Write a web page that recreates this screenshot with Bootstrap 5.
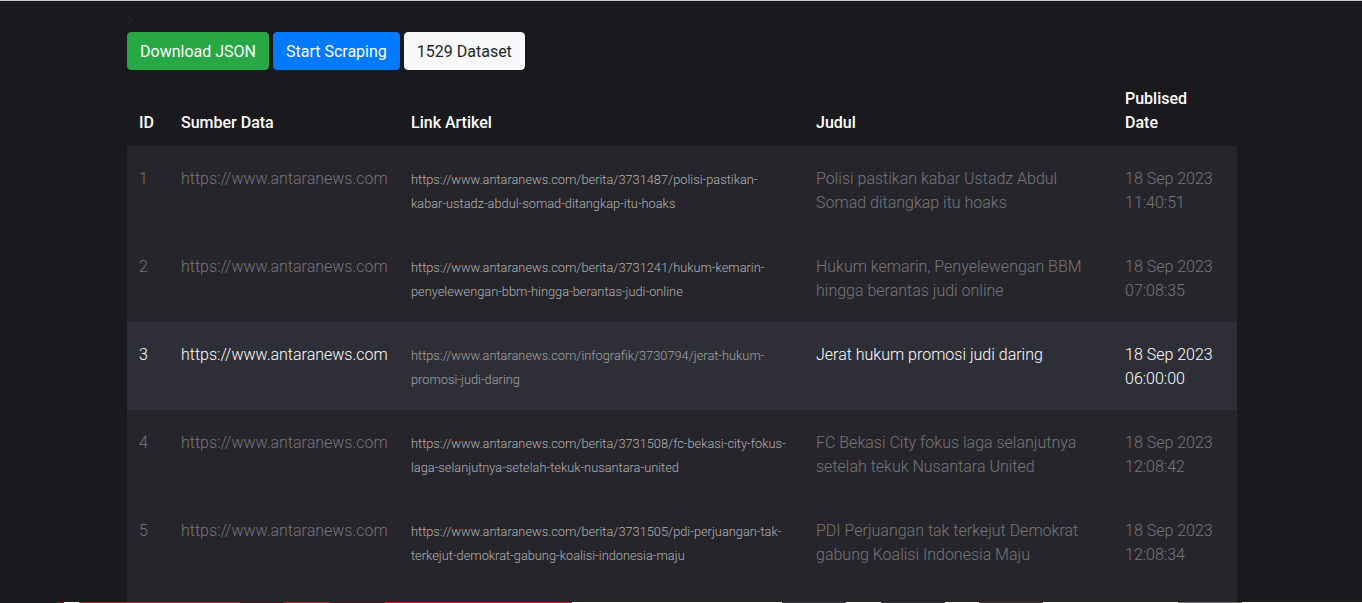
<!DOCTYPE html>
<html lang="id">
<head>
<meta charset="utf-8">
<meta name="viewport" content="width=device-width, initial-scale=1">
<title>Dataset</title>
<link href="https://cdn.jsdelivr.net/npm/bootstrap@5.3.0/dist/css/bootstrap.min.css" rel="stylesheet">
<style>
body{font-family:Roboto,sans-serif;background:#1a191d;color:#26272b;font-weight:300;border-top:1px solid #c5c7c5}
.shell{max-width:1140px;padding:7px 14px 0 16px}
.stray{line-height:24px;font-size:16px}
.tools .btn{--bs-btn-border-radius:4px;font-weight:400;line-height:24px;padding:7px 12px 5px}
.btn-go{--bs-btn-bg:#28a745;--bs-btn-border-color:#28a745;--bs-btn-color:#fff}
.btn-start{--bs-btn-bg:#007bff;--bs-btn-border-color:#007bff;--bs-btn-color:#fff}
.tools .btn-light{--bs-btn-color:#212529}
.news{table-layout:fixed;line-height:24px}
.news th{font-weight:500;color:#fff;padding:13px 12px 11px;vertical-align:bottom}
.news td{height:88px;padding:21px 12px 18px;vertical-align:top;color:#777;background:#26252b}
.news a{display:block;margin-top:1px;color:#b3b3b3;text-decoration:none;font-size:80%}
.news .on td{background:#2e2f36;color:#fff}
.news .on a{color:#a3a3a3}
.c-id{width:42px}.c-src{width:230px}.c-link{width:405px}.c-title{width:309px}
.strip{flex:0 0 1px;background:linear-gradient(90deg,#1a191d 0 4.2%,#8b1a22 4.2% 4.7%,#fff 4.7% 5.8%,#b3262c 5.8% 17.6%,#4c161a 17.6% 20.8%,#b3262c 20.8% 24.2%,#4c161a 24.2% 28.3%,#d01c22 28.3% 42%,#fff 42% 57.4%,#444 57.4% 62.1%,#fff 62.1% 64.7%,#333 64.7% 69.4%,#fff 69.4% 71.9%,#4a3a38 71.9% 76.6%,#fff 76.6% 86.5%,#777 86.5% 91.2%,#fff 91.2%)}
</style>
</head>
<body class="d-flex flex-column vh-100 overflow-hidden">
<div class="flex-fill overflow-hidden">
<main class="container shell">
<div class="stray">&gt;</div>
<div class="tools d-flex gap-1">
<button class="btn btn-go" type="button">Download JSON</button>
<button class="btn btn-start" type="button">Start Scraping</button>
<button class="btn btn-light" type="button">1529 Dataset</button>
</div>
<table class="news w-100 mt-1">
<colgroup><col class="c-id"><col class="c-src"><col class="c-link"><col class="c-title"><col></colgroup>
<thead><tr><th>ID</th><th>Sumber Data</th><th>Link Artikel</th><th>Judul</th><th>Publised<br>Date</th></tr></thead>
<tbody>
<tr><td>1</td><td>https://www.antaranews.com</td><td><a href="#">https://www.antaranews.com/berita/3731487/polisi-pastikan-kabar-ustadz-abdul-somad-ditangkap-itu-hoaks</a></td><td>Polisi pastikan kabar Ustadz Abdul Somad ditangkap itu hoaks</td><td>18 Sep 2023 11:40:51</td></tr>
<tr><td>2</td><td>https://www.antaranews.com</td><td><a href="#">https://www.antaranews.com/berita/3731241/hukum-kemarin-penyelewengan-bbm-hingga-berantas-judi-online</a></td><td>Hukum kemarin, Penyelewengan BBM hingga berantas judi online</td><td>18 Sep 2023 07:08:35</td></tr>
<tr class="on"><td>3</td><td>https://www.antaranews.com</td><td><a href="#">https://www.antaranews.com/infografik/3730794/jerat-hukum-promosi-judi-daring</a></td><td>Jerat hukum promosi judi daring</td><td>18 Sep 2023 06:00:00</td></tr>
<tr><td>4</td><td>https://www.antaranews.com</td><td><a href="#">https://www.antaranews.com/berita/3731508/fc-bekasi-city-fokus-laga-selanjutnya-setelah-tekuk-nusantara-united</a></td><td>FC Bekasi City fokus laga selanjutnya setelah tekuk Nusantara United</td><td>18 Sep 2023 12:08:42</td></tr>
<tr><td>5</td><td>https://www.antaranews.com</td><td><a href="#">https://www.antaranews.com/berita/3731505/pdi-perjuangan-tak-terkejut-demokrat-gabung-koalisi-indonesia-maju</a></td><td>PDI Perjuangan tak terkejut Demokrat gabung Koalisi Indonesia Maju</td><td>18 Sep 2023 12:08:34</td></tr>
<tr><td colspan="5"></td></tr>
</tbody>
</table>
</main>
</div>
<div class="strip"></div>
<script src="https://cdn.jsdelivr.net/npm/bootstrap@5.3.0/dist/js/bootstrap.bundle.min.js"></script>
</body>
</html>
